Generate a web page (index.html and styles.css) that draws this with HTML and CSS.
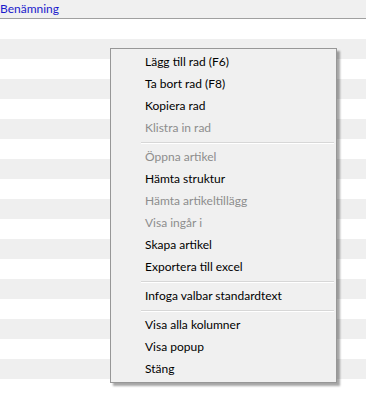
FILE: index.html
```html
<!DOCTYPE html>
<html>
<head>
  <meta charset="utf-8">
  <link rel="stylesheet" href="styles.css">
</head>
<body>
  <div class="grid">
    <div class="grid-header">
      <span class="col-title">Benämning</span>
    </div>
    <div class="row"></div>
    <div class="row alt"></div>
    <div class="row"></div>
    <div class="row alt"></div>
    <div class="row"></div>
    <div class="row alt"></div>
    <div class="row"></div>
    <div class="row alt"></div>
    <div class="row"></div>
    <div class="row alt"></div>
    <div class="row"></div>
    <div class="row alt"></div>
    <div class="row"></div>
    <div class="row alt"></div>
    <div class="row"></div>
    <div class="row alt"></div>
    <div class="row"></div>
    <div class="row alt"></div>
    <div class="row"></div>
  </div>

  <div class="context-menu">
    <div class="menu-item">Lägg till rad (F6)</div>
    <div class="menu-item">Ta bort rad (F8)</div>
    <div class="menu-item">Kopiera rad</div>
    <div class="menu-item disabled">Klistra in rad</div>
    <div class="menu-separator"></div>
    <div class="menu-item disabled">Öppna artikel</div>
    <div class="menu-item">Hämta struktur</div>
    <div class="menu-item disabled">Hämta artikeltillägg</div>
    <div class="menu-item disabled">Visa ingår i</div>
    <div class="menu-item">Skapa artikel</div>
    <div class="menu-item">Exportera till excel</div>
    <div class="menu-separator"></div>
    <div class="menu-item">Infoga valbar standardtext</div>
    <div class="menu-separator"></div>
    <div class="menu-item">Visa alla kolumner</div>
    <div class="menu-item">Visa popup</div>
    <div class="menu-item">Stäng</div>
  </div>
</body>
</html>
```

FILE: styles.css
```css
body {
  margin: 0;
  width: 366px;
  height: 398px;
  overflow: hidden;
  background: #ffffff;
  font-family: Lato, "Noto Sans", sans-serif;
  font-size: 12px;
}

.grid {
  display: flex;
  flex-direction: column;
}

.grid-header {
  height: 18px;
  background: #f0f0f0;
  border-bottom: 1px solid #a0a0a0;
  display: flex;
  align-items: center;
}

.col-title {
  color: #1a1acc;
  line-height: 18px;
}

.row {
  height: 20px;
  flex-shrink: 0;
  background: #ffffff;
}

.row.alt {
  background: #efefef;
}

.context-menu {
  position: absolute;
  left: 110px;
  top: 48px;
  width: 225px;
  padding: 2px 0;
  background: #f0f0f0;
  border: 1px solid #979797;
  box-shadow: 3px 3px 2px rgba(0, 0, 0, 0.35);
}

.menu-item {
  height: 22px;
  line-height: 22px;
  padding-left: 34px;
  color: #000000;
  white-space: nowrap;
}

.menu-item.disabled {
  color: #8d8d8d;
}

.menu-separator {
  height: 1px;
  margin: 3px 2px 2px 30px;
  background: #d7d7d7;
  border-bottom: 1px solid #ffffff;
}
```
